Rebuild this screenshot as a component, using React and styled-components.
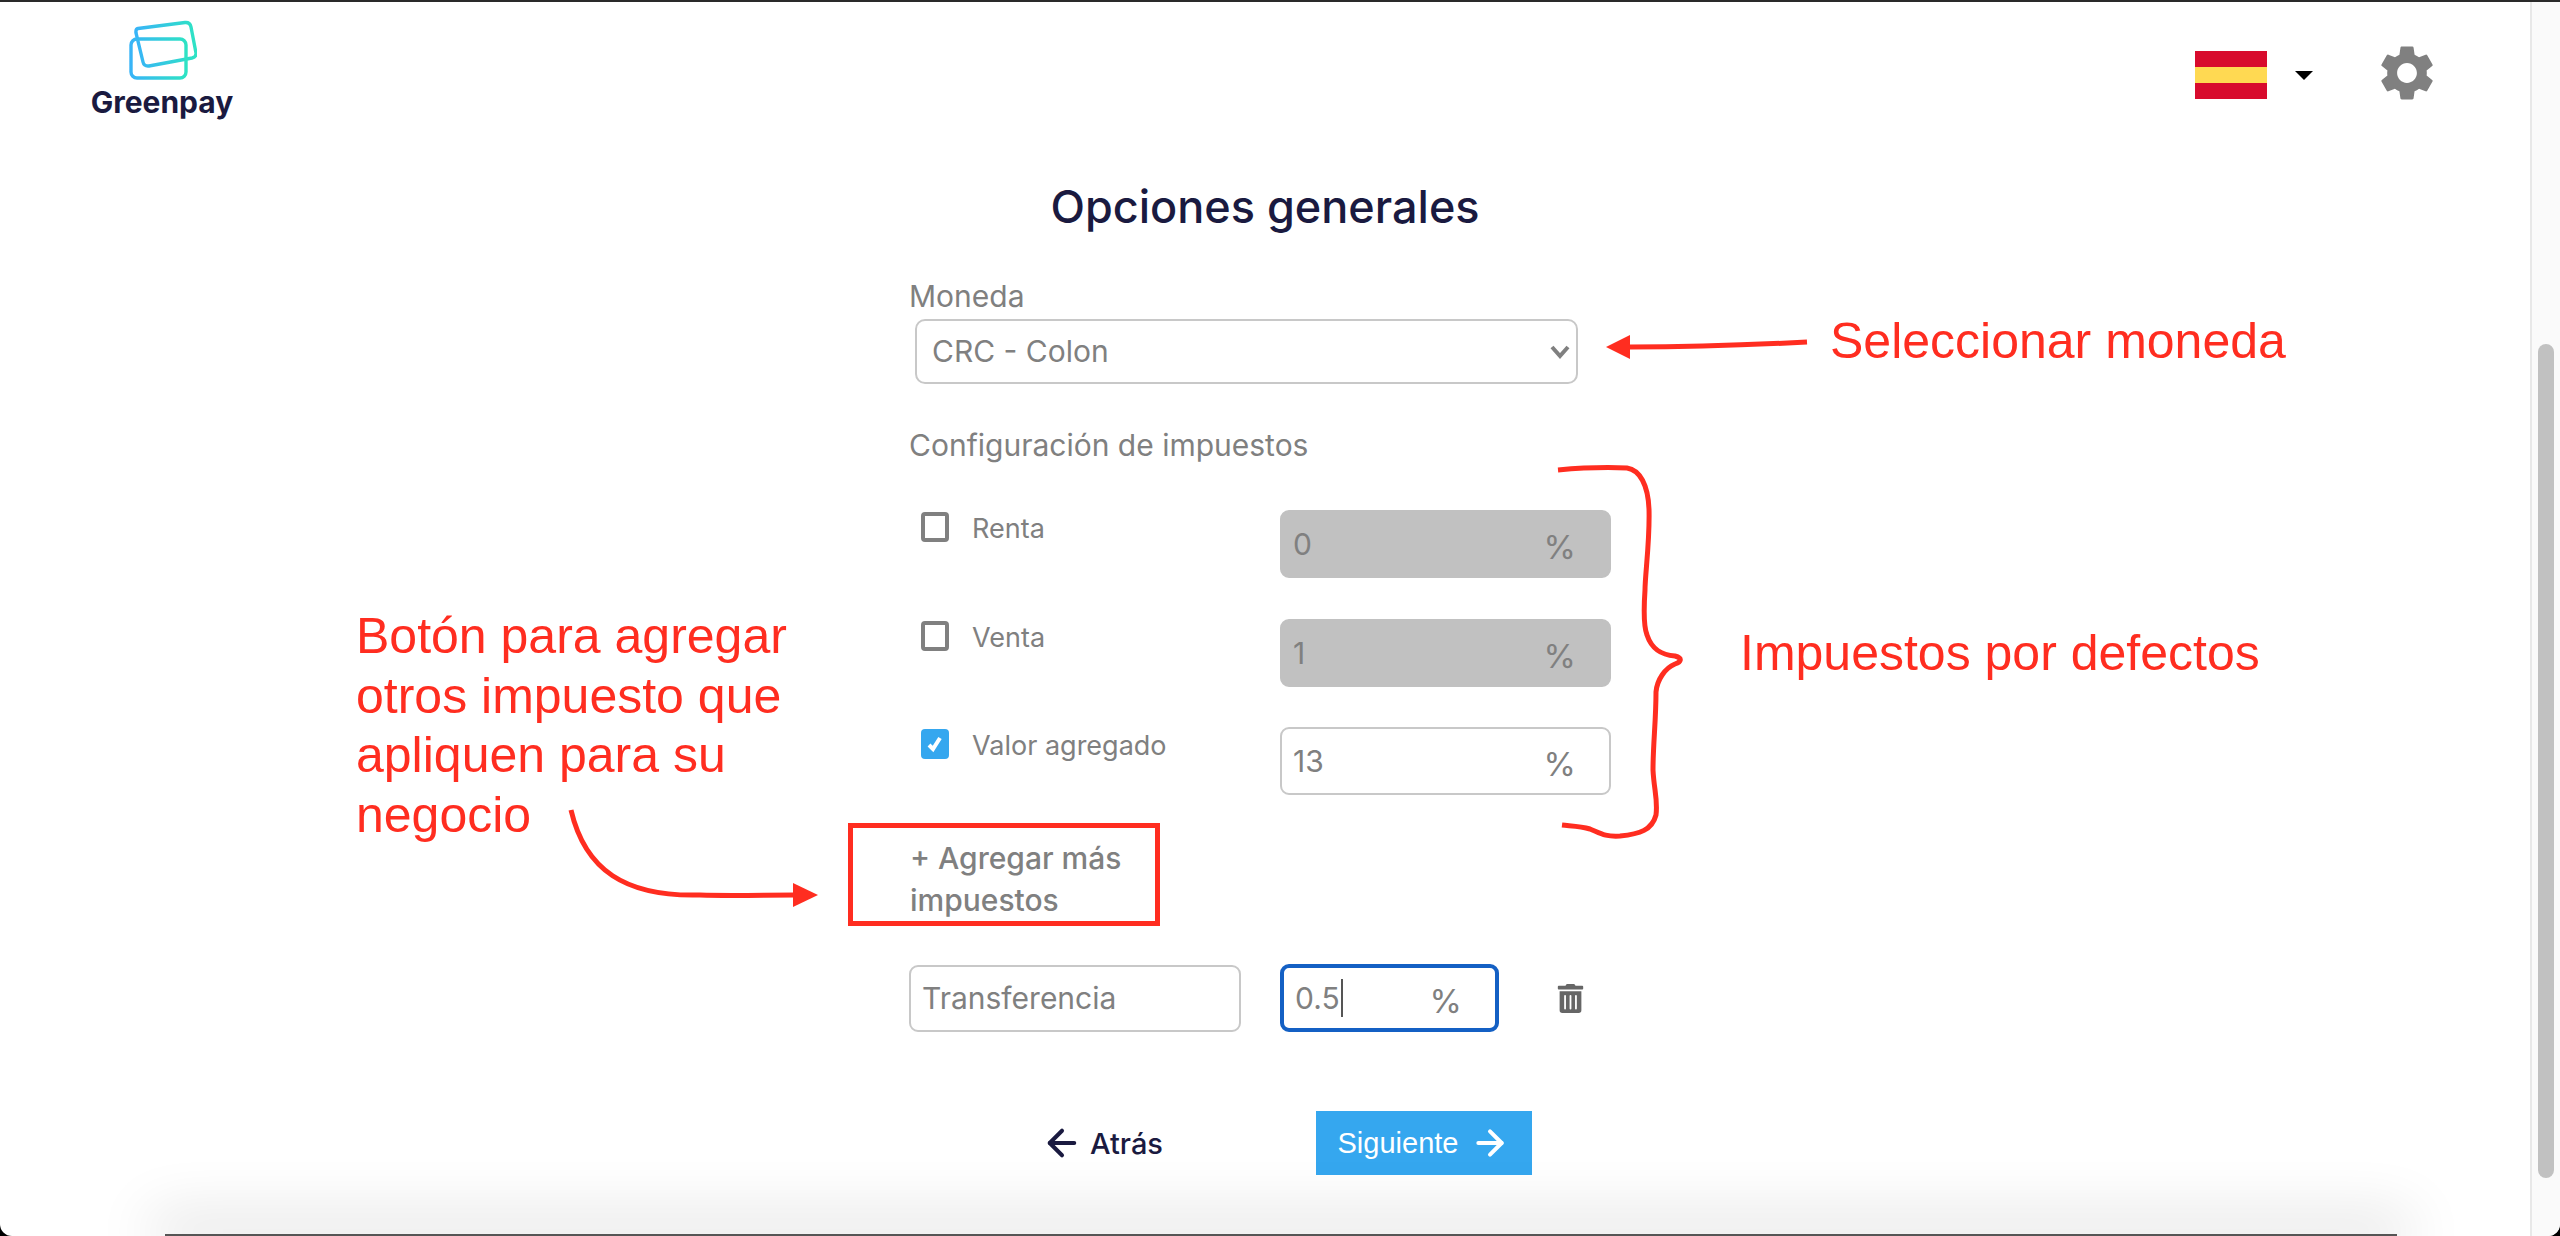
import React from 'react';
import styled, { createGlobalStyle } from 'styled-components';
import { ArrowLeft, ArrowRight } from 'lucide-react';
import { MdSettings } from 'react-icons/md';
import { FaTrashAlt } from 'react-icons/fa';

const Global = createGlobalStyle`
    html, body {
        margin: 0;
        height: 100%;
        overflow: hidden;
        background: #000;
    }
    * { box-sizing: border-box; }
`;

const ink = '#1a1a40';
const grey = '#808080';
const blue = '#35a7ef';
const red = '#ff2d20';

const Frame = styled.div`
    position: relative;
    height: 1236px;
    display: flex;
    overflow: hidden;
    border-top: 2px solid #2a2a2a;
    border-radius: 0 0 12px 12px;
    background: #fff;
    font-family: Inter, "Noto Sans", sans-serif;
`;
const Main = styled.div`
    width: 2530px;
    flex-shrink: 0;
`;
const Track = styled.div`
    flex: 1;
    padding: 342px 6px 0 6px;
    background: #fafafa;
    border-left: 2px solid #e8e8e8;
`;
const Thumb = styled.div`
    width: 16px;
    height: 834px;
    border-radius: 8px;
    background: #c1c1c1;
`;
const FloorShadow = styled.div`
    position: absolute;
    left: 165px;
    right: 163px;
    top: 1232px;
    height: 2px;
    background: #555;
    box-shadow: 0 -4px 60px 14px rgba(0, 0, 0, 0.14);
`;

const Header = styled.header`
    height: 175px;
    padding: 18px 96px 0 92px;
    display: flex;
    justify-content: space-between;
    align-items: flex-start;
`;
const Logo = styled.div`
    display: flex;
    flex-direction: column;
    align-items: center;
    width: 140px;
`;
const LogoName = styled.div`
    font-size: 30px;
    line-height: 36px;
    font-weight: 700;
    color: ${ink};
`;
const HeaderRight = styled.div`
    display: flex;
    align-items: center;
    padding-top: 24px;
`;
const Flag = styled.div`
    width: 72px;
    height: 48px;
    background: linear-gradient(#d80b2d 33.3%, #ffd952 33.3%, #ffd952 66.6%, #d80b2d 66.6%);
`;
const Caret = styled.div`
    width: 0;
    height: 0;
    margin: 0 67px 0 28px;
    border-left: 9px solid transparent;
    border-right: 9px solid transparent;
    border-top: 9px solid #000;
`;
const Gear = styled(MdSettings)`
    display: block;
    margin: -4px -6px 0 -6px;
    color: ${grey};
`;

const Content = styled.main`
    width: 712px;
    margin: 0 auto;
`;
const Title = styled.h1`
    margin: 0 0 41px;
    height: 60px;
    text-align: center;
    font-size: 45px;
    line-height: 60px;
    font-weight: 500;
    color: ${ink};
`;
const FieldLabel = styled.div`
    font-size: 30px;
    line-height: 36px;
    color: ${grey};
`;
const SelectWrap = styled.div`
    position: relative;
    width: 663px;
    margin: 5px 0 43px 6px;
`;
const Select = styled.select`
    display: block;
    width: 100%;
    height: 65px;
    padding: 0 40px 2px 15px;
    appearance: none;
    font-family: inherit;
    font-size: 30px;
    color: ${grey};
    background: #fff;
    border: 2px solid #c8c8c8;
    border-radius: 10px;
    outline: none;
`;
const Chevron = styled.svg`
    position: absolute;
    right: 8px;
    top: 26px;
`;
const TaxList = styled.div`
    margin-top: 47px;
    display: flex;
    flex-direction: column;
    gap: 40.5px;
`;
const TaxRow = styled.div`
    display: flex;
    align-items: flex-start;
    height: 68px;
    padding-left: 12px;
`;
const Check = styled.div`
    width: 28px;
    height: 30px;
    margin-top: 2px;
    display: flex;
    align-items: center;
    justify-content: center;
    border-radius: 4px;
    border: ${({ $on }) => ($on ? 'none' : `4px solid ${grey}`)};
    background: ${({ $on }) => ($on ? blue : '#fff')};
`;
const TaxName = styled.div`
    width: 308px;
    margin: 2px 0 0 23px;
    font-size: 27px;
    line-height: 34px;
    color: ${grey};
`;
const Field = styled.div`
    display: flex;
    align-items: center;
    justify-content: space-between;
    width: ${({ $w }) => $w}px;
    height: ${({ $h }) => $h || 68}px;
    padding: 0 33px 0 11px;
    border-radius: 9px;
    border: ${({ $focus }) => ($focus ? '4px solid #1460c4' : '2px solid #c8c8c8')};
    background: ${({ $off }) => ($off ? '#c1c1c1' : '#fff')};
    border-color: ${({ $off }) => $off && '#c1c1c1'};
    font-size: 30px;
    color: ${grey};
`;
const Value = styled.span`
    display: inline-block;
    line-height: 38px;
    padding-right: 1px;
    border-right: ${({ $caret }) => ($caret ? '2px solid #555' : 'none')};
`;
const Percent = styled.span`
    font-size: 33px;
    margin-top: 6px;
`;
const AddMore = styled.div`
    width: 240px;
    margin: 42px 0 0 1px;
    font-size: 30px;
    line-height: 42px;
    font-weight: 500;
    color: ${grey};
`;
const CustomRow = styled.div`
    display: flex;
    align-items: center;
    gap: 39px;
    margin-top: 43px;
`;
const Trash = styled(FaTrashAlt)`
    margin-left: 18px;
    color: #666;
`;
const Footer = styled.div`
    display: flex;
    align-items: center;
    margin-top: 79px;
    padding-left: 137px;
`;
const BackLink = styled.div`
    display: flex;
    align-items: center;
    width: 275px;
    gap: 7px;
    margin-left: -5px;
    font-size: 29px;
    font-weight: 500;
    color: ${ink};
`;
const NextButton = styled.button`
    display: flex;
    align-items: center;
    justify-content: center;
    gap: 12px;
    width: 216px;
    height: 64px;
    padding: 0;
    border: none;
    background: ${blue};
    color: #fff;
    font-family: "Liberation Sans", Arial, sans-serif;
    font-size: 29px;
`;

const Note = styled.div`
    position: absolute;
    left: ${({ $x }) => $x}px;
    top: ${({ $y }) => $y}px;
    font-family: "Liberation Sans", Arial, sans-serif;
    font-size: 50px;
    line-height: 59.5px;
    color: ${red};
    white-space: pre;
`;
const Marks = styled.svg`
    position: absolute;
    left: 0;
    top: -2px;
    pointer-events: none;
`;

function LogoMark() {
    return (
        <svg width="70" height="64" viewBox="0 0 70 64">
            <defs>
                <linearGradient id="cardGrad" x1="0" x2="1" y1="0.5" y2="0.5">
                    <stop offset="0" stopColor="#38b4f7" />
                    <stop offset="1" stopColor="#2ee3c4" />
                </linearGradient>
            </defs>
            <g fill="none" stroke="url(#cardGrad)" strokeWidth="3.4">
                <path d="M11 8.500 L58 2.500 Q63 2 64 7 L69 33 Q69.500 37 65 38 L22 46 Q17 46.500 16 42 L9 13 Q8.500 9 11 8.500 Z" />
                <rect x="4" y="19" width="55" height="39" rx="6" />
            </g>
        </svg>
    );
}

function PercentInput({ value, w, off, focus, caret }) {
    return (
        <Field $w={w} $off={off} $focus={focus}>
            <Value $caret={caret}>{value}</Value>
            <Percent>%</Percent>
        </Field>
    );
}

function TaxLine({ name, value, on, off }) {
    return (
        <TaxRow>
            <Check $on={on}>
                {on && (
                    <svg width="20" height="20" viewBox="0 0 20 20">
                        <path d="M4 11 L8 15 L15 4" fill="none" stroke="#fff" strokeWidth="4" />
                    </svg>
                )}
            </Check>
            <TaxName>{name}</TaxName>
            <PercentInput value={value} w={331} off={off} />
        </TaxRow>
    );
}

export default function App() {
    return (
        <>
            <Global />
            <Frame>
                <Main>
                    <Header>
                        <Logo>
                            <LogoMark />
                            <LogoName>Greenpay</LogoName>
                        </Logo>
                        <HeaderRight>
                            <Flag />
                            <Caret />
                            <Gear size={66} />
                        </HeaderRight>
                    </Header>
                    <Content>
                        <Title>Opciones generales</Title>
                        <FieldLabel>Moneda</FieldLabel>
                        <SelectWrap>
                            <Select defaultValue="crc">
                                <option value="crc">CRC - Colon</option>
                            </Select>
                            <Chevron width="20" height="14" viewBox="0 0 20 14">
                                <path d="M2 2 L10 11 L18 2" fill="none" stroke={grey} strokeWidth="4" />
                            </Chevron>
                        </SelectWrap>
                        <FieldLabel>Configuración de impuestos</FieldLabel>
                        <TaxList>
                            <TaxLine name="Renta" value="0" off />
                            <TaxLine name="Venta" value="1" off />
                            <TaxLine name="Valor agregado" value="13" on />
                        </TaxList>
                        <AddMore>+ Agregar más impuestos</AddMore>
                        <CustomRow>
                            <Field $w={332} $h={67}>
                                <Value>Transferencia</Value>
                            </Field>
                            <PercentInput value="0.5" w={219} focus caret />
                            <Trash size={29} />
                        </CustomRow>
                        <Footer>
                            <BackLink>
                                <ArrowLeft size={42} strokeWidth={2.3} />
                                Atrás
                            </BackLink>
                            <NextButton>
                                Siguiente
                                <ArrowRight size={40} strokeWidth={2.4} />
                            </NextButton>
                        </Footer>
                    </Content>
                </Main>
                <Track>
                    <Thumb />
                </Track>
                <FloorShadow />

                <Note $x={1830} $y={310}>Seleccionar moneda</Note>
                <Note $x={1740} $y={622}>Impuestos por defectos</Note>
                <Note $x={356} $y={605}>{'Botón para agregar\notros impuesto que\napliquen para su\nnegocio'}</Note>
                <Marks width="2560" height="1236" viewBox="0 0 2560 1236" fill="none" stroke={red}>
                    <path d="M1630 347 C1690 347 1750 345 1807 342" strokeWidth="5" />
                    <path d="M1606 347 L1630 335 L1630 359 Z" fill={red} stroke="none" />
                    <path
                        d="M1558 470 C1580 468 1605 467 1627 468 C1640 470 1648 485 1649 509 C1650 540 1645 575 1645 590 C1644 605 1643 625 1647 635 C1652 650 1662 655 1675 656 C1683 658 1681 662 1675 664 C1665 668 1657 680 1656 692 C1656 720 1653 745 1653 770 C1654 790 1658 800 1656 815 C1652 830 1640 834 1620 836 C1605 837 1600 833 1590 829 C1580 826 1570 826 1562 825"
                        strokeWidth="5"
                    />
                    <path d="M571 810 C585 870 625 897 700 895 C730 896 765 895 795 895" strokeWidth="5" />
                    <path d="M818 895 L793 883 L793 907 Z" fill={red} stroke="none" />
                    <rect x="850.5" y="825.5" width="307" height="98" strokeWidth="5" />
                </Marks>
            </Frame>
        </>
    );
}
